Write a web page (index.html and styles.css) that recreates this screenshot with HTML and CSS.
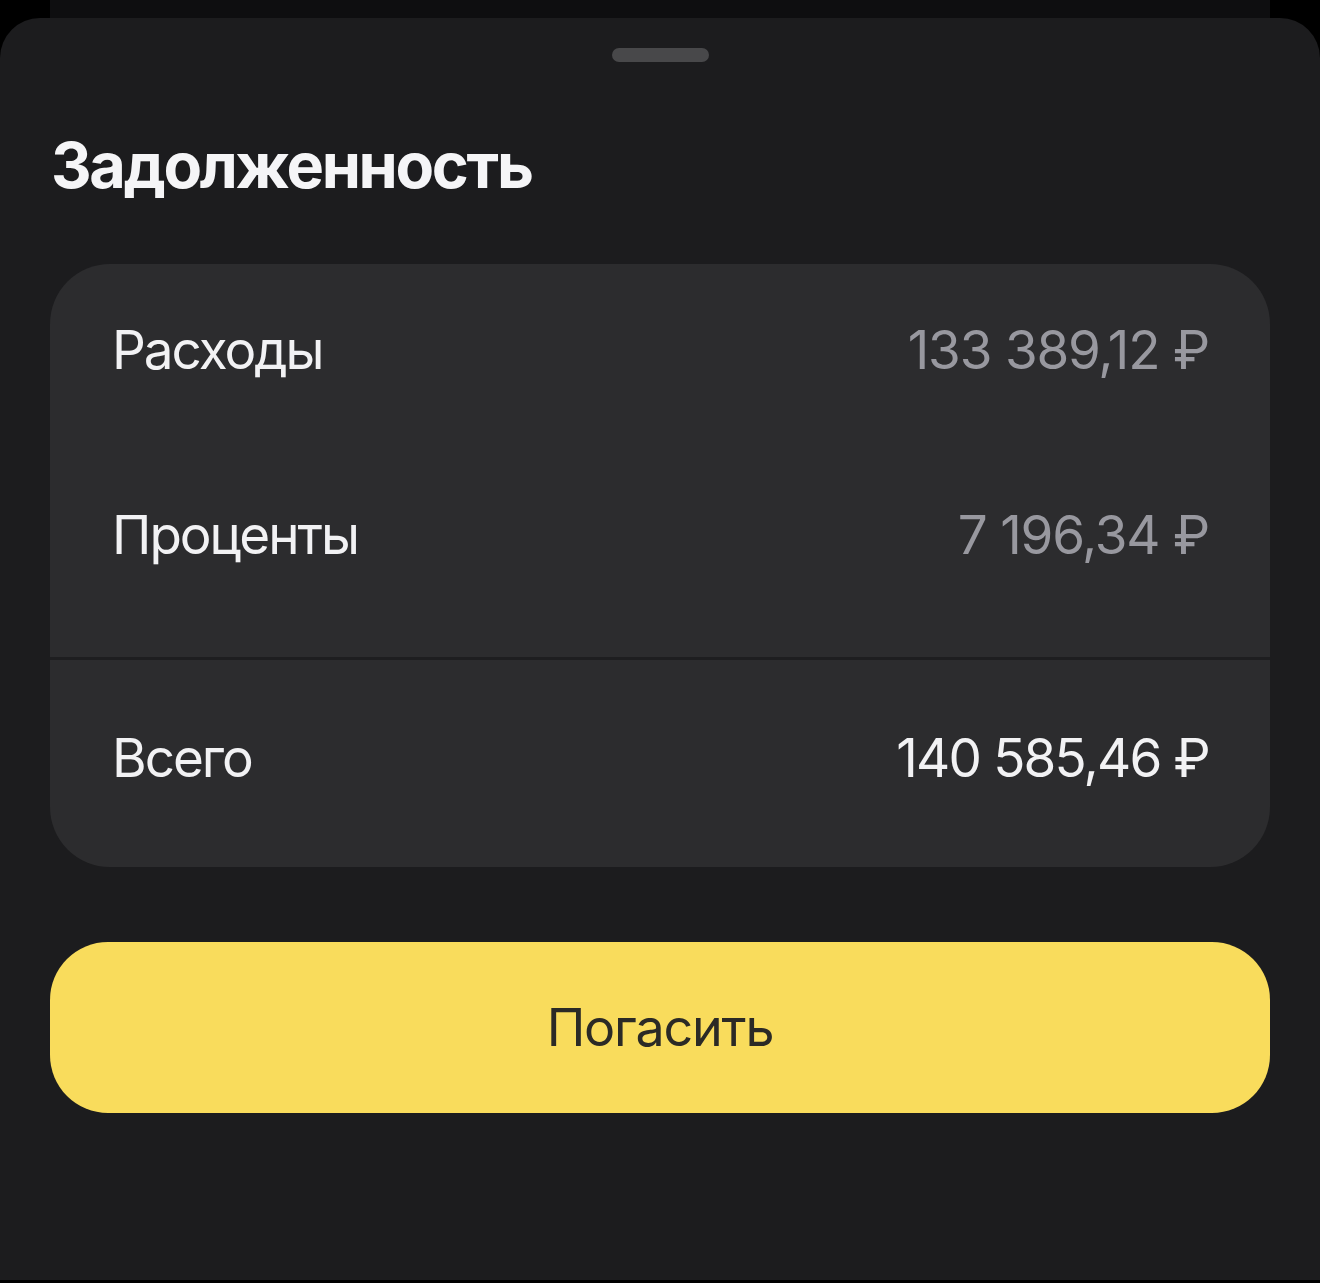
FILE: index.html
```html
<!DOCTYPE html>
<html lang="ru">
<head>
  <meta charset="UTF-8" />
  <meta name="viewport" content="width=device-width, initial-scale=1.0" />
  <title>Задолженность</title>
  <link rel="stylesheet" href="styles.css">
</head>
<body>
  <div class="backdrop"></div>

  <div class="sheet">
    <div class="handle"></div>

    <h2 class="sheet-title">Задолженность</h2>

    <div class="debt-card">
      <div class="debt-group">
        <div class="debt-row first">
          <span class="debt-label">Расходы</span>
          <span class="debt-value">133 389,12 ₽</span>
        </div>
        <div class="debt-row second">
          <span class="debt-label">Проценты</span>
          <span class="debt-value">7 196,34 ₽</span>
        </div>
      </div>

      <div class="debt-total">
        <span class="debt-label">Всего</span>
        <span class="debt-value total">140 585,46 ₽</span>
      </div>
    </div>

    <button class="pay-btn" type="button">Погасить</button>
  </div>
</body>
</html>
```

FILE: styles.css
```css
html, body {
  height: 100%;
}

body {
  margin: 0;
  padding: 0;
  background: #000;
  font-family: Inter, "Noto Sans", Arial, sans-serif;
  color: #fff;
  overflow: hidden;
}

/* the screen behind the sheet */
.backdrop {
  height: 18px;
  margin: 0 50px;
  background: #0e0e10;
}

.sheet {
  height: 1262px;
  background: #1c1c1e;
  border-radius: 40px 40px 0 0;
  padding: 0 50px;
  box-sizing: border-box;
  display: flex;
  flex-direction: column;
}

.handle {
  align-self: center;
  width: 97px;
  height: 14px;
  margin-top: 30px;
  border-radius: 7px;
  background: #48484a;
}

.sheet-title {
  margin: 72px 0 0 1px;
  font-size: 63px;
  line-height: 63px;
  font-weight: 700;
  letter-spacing: -2.3px;
  color: #f5f5f7;
}

.debt-card {
  margin-top: 67px;
  background: #2c2c2e;
  border-radius: 60px;
  overflow: hidden;
}

.debt-group {
  padding: 60px 61px 95px 62px;
  border-bottom: 3px solid #1e1e20;
}

.debt-row,
.debt-total {
  display: flex;
  justify-content: space-between;
  align-items: center;
  font-size: 53px;
  line-height: 53px;
}

.debt-row.second {
  margin-top: 132px;
}

.debt-total {
  padding: 72px 61px 82px 62px;
}

.debt-label {
  color: #f2f2f4;
  letter-spacing: -2px;
}

.debt-value {
  color: #98989f;
  letter-spacing: -1.2px;
}

.debt-value.total {
  color: #f2f2f4;
  letter-spacing: -1.8px;
}

.pay-btn {
  margin-top: 75px;
  width: 100%;
  height: 171px;
  border: none;
  border-radius: 58px;
  background: #f9dc5c;
  color: #2b2a26;
  font-family: inherit;
  font-size: 52px;
  letter-spacing: -1.2px;
  cursor: pointer;
}
```
